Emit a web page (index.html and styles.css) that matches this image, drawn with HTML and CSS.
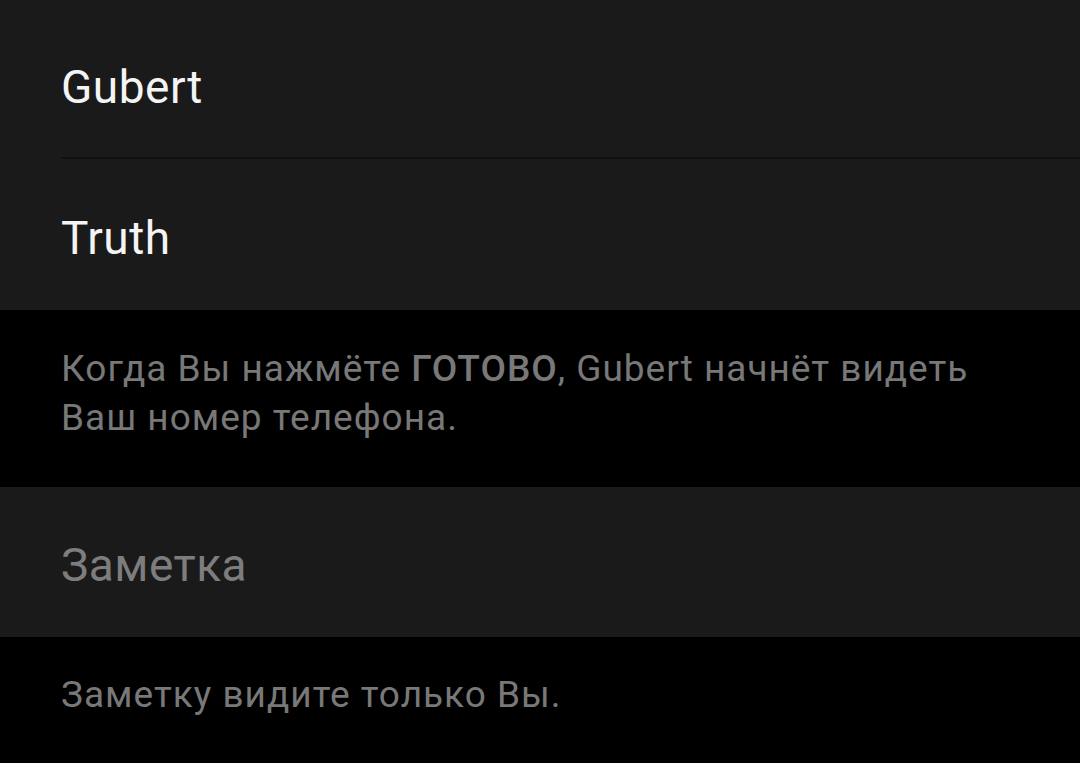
FILE: index.html
```html
<!DOCTYPE html>
<html lang="ru">
<head>
    <meta charset="UTF-8">
    <meta name="viewport" content="width=device-width, initial-scale=1.0">
    <title>Контакт</title>
    <link rel="stylesheet" href="styles.css">
</head>
<body>
    <div class="group">
        <div class="field field-first">
            <input type="text" class="field-input" value="Gubert">
        </div>
        <div class="field field-last">
            <input type="text" class="field-input" value="Truth">
        </div>
    </div>
    <div class="hint hint-share">
        Когда Вы нажмёте <b>ГОТОВО</b>, Gubert начнёт видеть<br>
        Ваш номер телефона.
    </div>
    <div class="group">
        <div class="field field-note">
            <input type="text" class="field-input" placeholder="Заметка">
        </div>
    </div>
    <div class="hint hint-note">
        Заметку видите только Вы.
    </div>
</body>
</html>
```

FILE: styles.css
```css
body {
    margin: 0;
    padding: 0;
    background-color: #000;
    font-family: Roboto, "Noto Sans", sans-serif;
    overflow: hidden;
}

.group {
    background-color: #1a1a1a;
    padding-left: 61px;
}

.field {
    display: flex;
    align-items: center;
    box-sizing: border-box;
}

.field-first {
    height: 159px;
    padding-top: 17px;
    border-bottom: 2px solid #111;
}

.field-last {
    height: 151px;
    padding-top: 6px;
}

.field-note {
    height: 150px;
    padding-top: 5px;
}

.field-input {
    width: 100%;
    background: transparent;
    border: none;
    outline: none;
    padding: 0;
    font-family: inherit;
    font-size: 46px;
    letter-spacing: 0.5px;
    color: #f4f4f4;
}

.field-input::placeholder {
    color: #7d7d7d;
}

.hint {
    color: #787878;
    font-size: 37px;
    letter-spacing: 1px;
    line-height: 49px;
    padding: 0 61px;
}

.hint b {
    font-weight: 500;
}

.hint-share {
    height: 177px;
    padding-top: 34px;
    box-sizing: border-box;
}

.hint-note {
    padding-top: 33px;
}
```
